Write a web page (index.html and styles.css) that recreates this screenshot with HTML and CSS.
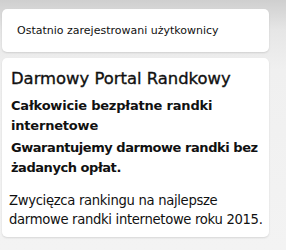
FILE: index.html
```html
<!DOCTYPE html>
<html lang="pl">
<head>
<meta charset="utf-8">
<link rel="stylesheet" href="styles.css">
</head>
<body>
<div class="page">
  <div class="card card-top">
    <p class="recent">Ostatnio zarejestrowani użytkownicy</p>
  </div>
  <div class="card card-main">
    <h1 class="title">Darmowy Portal Randkowy</h1>
    <h2 class="sub sub-first">Całkowicie bezpłatne randki internetowe</h2>
    <h2 class="sub">Gwarantujemy darmowe randki bez żadanych opłat.</h2>
    <p class="desc">Zwycięzca rankingu na najlepsze darmowe randki internetowe roku 2015.</p>
  </div>
</div>
</body>
</html>
```
FILE: styles.css
```css
html, body {
  margin: 0;
  padding: 0;
}
body {
  width: 286px;
  height: 250px;
  overflow: hidden;
  background: linear-gradient(to bottom, #cfcfcf 0px, #e6e6e6 30px, #f0f0f0 70px, #f3f3f3 100%);
  font-family: "DejaVu Sans", sans-serif;
  color: #111;
}
.page {
  width: 267px;
  margin-left: 2px;
  padding-top: 9px;
  display: flex;
  flex-direction: column;
  gap: 6px;
}
.card {
  background: #fff;
  border-radius: 5px;
  box-shadow: 0 1px 2px rgba(0,0,0,0.12);
}
.card-top {
  height: 43px;
  display: flex;
  align-items: center;
  padding-left: 15px;
}
.recent {
  margin: 0;
  font-size: 11px;
}
.card-main {
  padding: 11px 9px 8px 9px;
}
.title {
  margin: 0;
  font-size: 16.4px;
  line-height: 20px;
  font-weight: normal;
  -webkit-text-stroke: 0.35px #111;
}
.sub {
  margin: 0 -4px 0 0;
  font-size: 13px;
  font-weight: bold;
  line-height: 20px;
  letter-spacing: -0.45px;
}
.sub-first {
  margin: 7px -4px 2px 0;
  letter-spacing: -0.2px;
}
.desc {
  margin: 13px -6px 0 -2px;
  font-size: 13.2px;
  line-height: 19px;
  letter-spacing: -0.32px;
}
```
